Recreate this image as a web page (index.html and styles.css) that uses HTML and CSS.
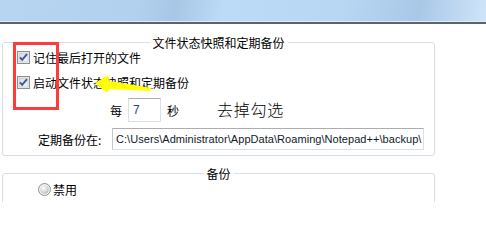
FILE: index.html
```html
<!DOCTYPE html>
<html lang="zh-CN">
<head>
<meta charset="utf-8">
<title>文件状态快照和定期备份</title>
<link rel="stylesheet" href="styles.css">
</head>
<body>
<div class="titlebar"></div>
<div class="content">
  <section class="group g1">
    <span class="legend">文件状态快照和定期备份</span>
    <label class="check-row r1">
      <svg class="cb" width="13" height="13" viewBox="0 0 13 13"><defs><linearGradient id="cbg" x1="0" y1="0" x2="1" y2="1"><stop offset="0" stop-color="#d6d8dc"/><stop offset="1" stop-color="#f7f8f9"/></linearGradient></defs><rect x="0.5" y="0.5" width="12" height="12" fill="#f4f4f4" stroke="#8e8f8f"/><rect x="2" y="2" width="9" height="9" fill="url(#cbg)" stroke="#b9bcc2" stroke-width="0.6"/><path d="M3 6.3 L5.2 8.8 L10 3.2" fill="none" stroke="#40589a" stroke-width="2"/></svg>
      <span>记住最后打开的文件</span>
    </label>
    <label class="check-row r2">
      <svg class="cb" width="13" height="13" viewBox="0 0 13 13"><rect x="0.5" y="0.5" width="12" height="12" fill="#f4f4f4" stroke="#8e8f8f"/><rect x="2" y="2" width="9" height="9" fill="url(#cbg)" stroke="#b9bcc2" stroke-width="0.6"/><path d="M3 6.3 L5.2 8.8 L10 3.2" fill="none" stroke="#40589a" stroke-width="2"/></svg>
      <span>启动文件状态快照和定期备份</span>
    </label>
    <div class="interval-row">
      <span>每</span>
      <span class="num-box">7</span>
      <span class="sec">秒</span>
      <span class="note">去掉勾选</span>
    </div>
    <div class="path-row">
      <span class="path-label">定期备份在:</span>
      <span class="path-box">C:\Users\Administrator\AppData\Roaming\Notepad++\backup\</span>
    </div>
  </section>
  <section class="group g2">
    <span class="legend">备份</span>
    <label class="radio-row">
      <svg class="rb" width="13" height="13" viewBox="0 0 13 13"><defs><radialGradient id="rbg" cx="0.4" cy="0.35" r="0.7"><stop offset="0" stop-color="#ffffff"/><stop offset="0.6" stop-color="#d9d9d9"/><stop offset="1" stop-color="#b5b5b5"/></radialGradient></defs><circle cx="6.5" cy="6.5" r="6" fill="#f2f2f2" stroke="#8e8f8f"/><circle cx="6.5" cy="6.5" r="4.3" fill="url(#rbg)"/></svg>
      <span>禁用</span>
    </label>
  </section>
</div>
<div class="annot-box"></div>
<svg class="annot-arrow" width="486" height="202" viewBox="0 0 486 202"><polygon points="95,83 108,75 109,81 152,88 150,91 109,89 107,93" fill="#ffff00"/></svg>
</body>
</html>
```

FILE: styles.css
```css
* { box-sizing: border-box; }
html, body { margin: 0; padding: 0; background: #ffffff; }
body {
  width: 486px;
  height: 202px;
  overflow: hidden;
  position: relative;
  font-family: "Noto Sans CJK SC", "Noto Sans", sans-serif;
  font-size: 12px;
  line-height: 13px;
  color: #000;
}
.titlebar {
  height: 24px;
  background: linear-gradient(100deg, #b7d5f1 0%, #b2d1ee 28%, #a8c7e6 36%, #bcdbf7 46%, #b8d7f3 70%, #a9c8e7 86%, #cfe5f9 100%);
  border-bottom: 2px solid #5a646d;
  box-shadow: inset 0 -1px 0 #dfeefb;
}
.content {
  padding-left: 2px;
}
.group {
  position: relative;
  width: 433px;
  border: 1px solid #d5dfe5;
  border-radius: 3px;
}
.g1 {
  margin-top: 18px;
  height: 114px;
  display: flex;
  flex-direction: column;
}
.g2 {
  margin-top: 17px;
  height: 60px;
}
.legend {
  position: absolute;
  top: -7px;
  left: 50%;
  transform: translateX(-50%);
  background: #fff;
  padding: 0 3px;
  white-space: nowrap;
  line-height: 13px;
}
.check-row {
  display: flex;
  align-items: center;
  height: 13px;
  padding-left: 14px;
  gap: 3px;
}
.r1 { margin-top: 8px; }
.r2 { margin-top: 12px; }
.cb, .rb { flex: none; display: block; }
.interval-row {
  display: flex;
  align-items: center;
  height: 24px;
  margin-top: 9px;
  padding-left: 107px;
}
.num-box {
  width: 33px;
  height: 24px;
  margin-left: 6px;
  border: 1px solid #dbdfe6;
  border-top-color: #abadb3;
  padding-left: 4px;
  line-height: 22px;
  color: #1d45a0;
  font-family: "Liberation Sans", sans-serif;
  font-size: 12px;
}
.sec { margin-left: 6px; }
.note {
  margin-left: 38px;
  font-size: 16px;
  line-height: 16px;
  font-weight: 300;
  letter-spacing: 0.7px;
  margin-top: -3px;
}
.path-row {
  display: flex;
  align-items: center;
  height: 22px;
  margin-top: 6px;
  padding-left: 35px;
}
.path-label { width: 74px; flex: none; }
.path-box {
  width: 312px;
  height: 22px;
  border: 1px solid #dbdfe6;
  border-top-color: #abadb3;
  border-left-color: #c5cad1;
  padding-left: 3px;
  line-height: 20px;
  font-family: "Liberation Sans", sans-serif;
  font-size: 11px;
  letter-spacing: 0.05px;
  color: #111a2a;
  white-space: nowrap;
  overflow: hidden;
}
.radio-row {
  display: flex;
  align-items: center;
  height: 13px;
  margin-top: 9px;
  padding-left: 35px;
  gap: 2px;
}
.annot-box {
  position: absolute;
  left: 13px;
  top: 42px;
  width: 46px;
  height: 68px;
  border: 3px solid #fd3c3c;
}
.annot-arrow {
  position: absolute;
  left: 0;
  top: 0;
  pointer-events: none;
}
```
